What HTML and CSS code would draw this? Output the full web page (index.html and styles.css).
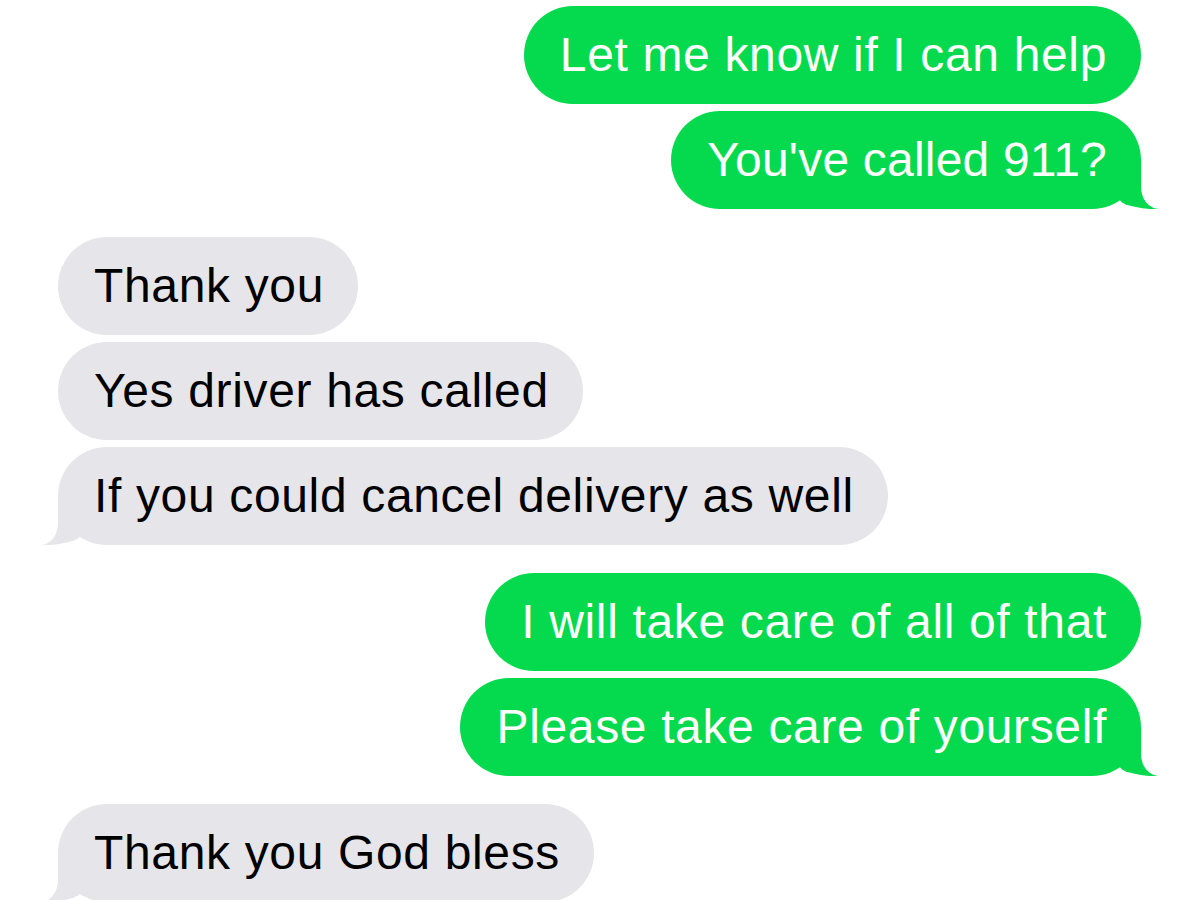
FILE: index.html
```html
<!DOCTYPE html>
<html lang="en">
<head>
    <meta charset="UTF-8">
    <meta name="viewport" content="width=device-width, initial-scale=1.0">
    <title>Messages</title>
    <link rel="stylesheet" href="styles.css">
</head>
<body>
    <div class="thread">
        <div class="group me">
            <div class="bubble">Let me know if I can help</div>
            <div class="bubble tail tight">You've called 911?</div>
        </div>
        <div class="group them">
            <div class="bubble">Thank you</div>
            <div class="bubble">Yes driver has called</div>
            <div class="bubble tail">If you could cancel delivery as well</div>
        </div>
        <div class="group me">
            <div class="bubble">I will take care of all of that</div>
            <div class="bubble tail">Please take care of yourself</div>
        </div>
        <div class="group them">
            <div class="bubble tail">Thank you God bless</div>
        </div>
    </div>
</body>
</html>
```

FILE: styles.css
```css
body {
    margin: 0;
    padding: 0;
    background-color: #fff;
    font-family: "Liberation Sans", Arial, sans-serif;
    overflow: hidden;
}
.thread {
    display: flex;
    flex-direction: column;
    gap: 28px;
    padding: 6px 59px 0 58px;
}
.group {
    display: flex;
    flex-direction: column;
    gap: 7px;
}
.group.me {
    align-items: flex-end;
}
.group.them {
    align-items: flex-start;
}
.bubble {
    position: relative;
    height: 98px;
    line-height: 98px;
    padding: 0 34px 0 36px;
    border-radius: 49px;
    font-size: 48px;
    letter-spacing: 0.65px;
    white-space: nowrap;
}
.bubble.tight {
    letter-spacing: 0.2px;
}
.me .bubble {
    background-color: #05da4e;
    color: #fff;
}
.them .bubble {
    background-color: #e5e5ea;
    color: #000;
}

/* little tail under the last bubble of a group */
.tail::before,
.tail::after {
    content: "";
    position: absolute;
    bottom: 0;
    width: 40px;
    height: 50px;
}
.me .tail::before {
    right: -18px;
    background-color: #05da4e;
    border-bottom-left-radius: 38px 11px;
}
.me .tail::after {
    right: -40px;
    background-color: #fff;
    border-bottom-left-radius: 18px 22px;
}
.them .tail::before {
    left: -17px;
    background-color: #e5e5ea;
    border-bottom-right-radius: 38px 11px;
}
.them .tail::after {
    left: -40px;
    background-color: #fff;
    border-bottom-right-radius: 17px 22px;
}
```
